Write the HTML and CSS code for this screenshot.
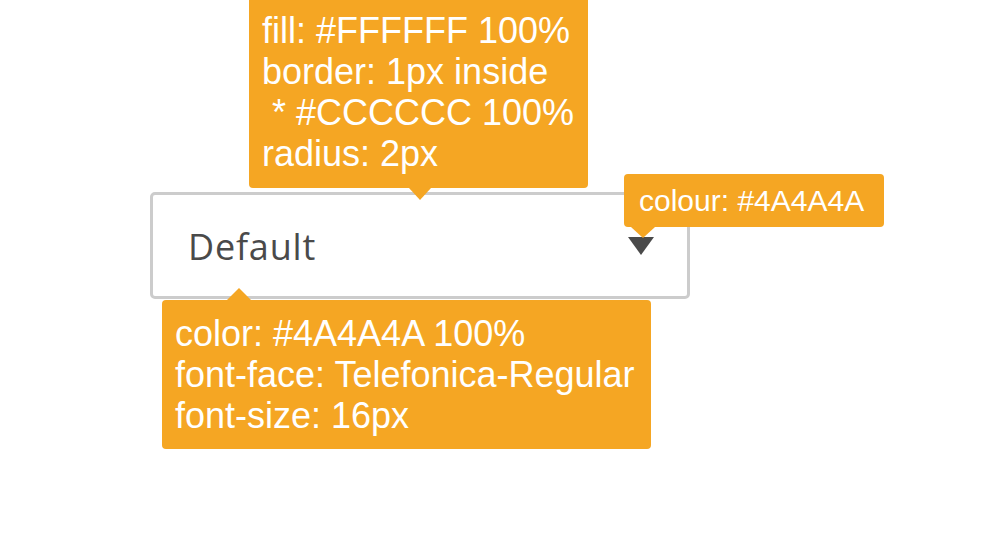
FILE: index.html
```html
<!DOCTYPE html>
<html>
<head>
<meta charset="utf-8">
<link rel="stylesheet" href="styles.css">
</head>
<body>
<div class="page">
  <div class="field">
    <div class="select">
      <span class="value">Default</span>
      <span class="caret"></span>
    </div>
    <div class="tip tip-top">
      <div class="line">fill: #FFFFFF 100%</div>
      <div class="line">border: 1px inside</div>
      <div class="line"> * #CCCCCC 100%</div>
      <div class="line">radius: 2px</div>
    </div>
    <div class="tip tip-caret">
      <div class="line">colour: #4A4A4A</div>
    </div>
    <div class="tip tip-bottom">
      <div class="line">color: #4A4A4A 100%</div>
      <div class="line">font-face: Telefonica-Regular</div>
      <div class="line">font-size: 16px</div>
    </div>
  </div>
</div>
</body>
</html>
```
FILE: styles.css
```css
html, body {
  margin: 0;
  padding: 0;
  background: #ffffff;
}

.page {
  width: 993px;
  height: 558px;
  box-sizing: border-box;
  padding: 192px 0 0 150px;
  overflow: hidden;
}

.field {
  position: relative;
  width: 540px;
}

.select {
  box-sizing: border-box;
  width: 540px;
  height: 107px;
  border: 3px solid #cccccc;
  border-radius: 5px;
  background: #ffffff;
  display: flex;
  align-items: center;
  justify-content: space-between;
  padding: 0 33px 0 35px;
}

.value {
  font-family: "Open Sans", "Noto Sans", sans-serif;
  font-size: 36px;
  letter-spacing: 0.8px;
  color: #4a4a4a;
  line-height: 1;
  margin-top: 2px;
}

.caret {
  width: 0;
  height: 0;
  border-left: 13.5px solid transparent;
  border-right: 13.5px solid transparent;
  border-top: 18px solid #4a4a4a;
  margin-top: 1px;
}

.tip {
  position: absolute;
  box-sizing: border-box;
  background: #f5a623;
  border-radius: 4px;
  color: #ffffff;
  font-family: "Liberation Sans", Arial, sans-serif;
  font-size: 36px;
  line-height: 41px;
}

.line {
  white-space: pre;
}

.tip::after {
  content: "";
  position: absolute;
  width: 0;
  height: 0;
}

.tip-top {
  left: 99px;
  bottom: calc(100% + 4px);
  width: 339px;
  padding: 15px 13px 14px;
}

.tip-top::after {
  left: 160px;
  top: 100%;
  border-left: 11px solid transparent;
  border-right: 11px solid transparent;
  border-top: 12px solid #f5a623;
}

.tip-caret {
  left: 474px;
  top: -18px;
  width: 260px;
  height: 53px;
  padding: 0 15px;
  font-size: 30px;
  line-height: 53px;
}

.tip-caret::after {
  left: 7px;
  top: 100%;
  border-left: 12px solid transparent;
  border-right: 12px solid transparent;
  border-top: 11px solid #f5a623;
}

.tip-bottom {
  left: 12px;
  top: 108px;
  width: 489px;
  padding: 13px 13px;
}

.tip-bottom::after {
  left: 65px;
  bottom: 100%;
  border-left: 12px solid transparent;
  border-right: 12px solid transparent;
  border-bottom: 12px solid #f5a623;
}
```
